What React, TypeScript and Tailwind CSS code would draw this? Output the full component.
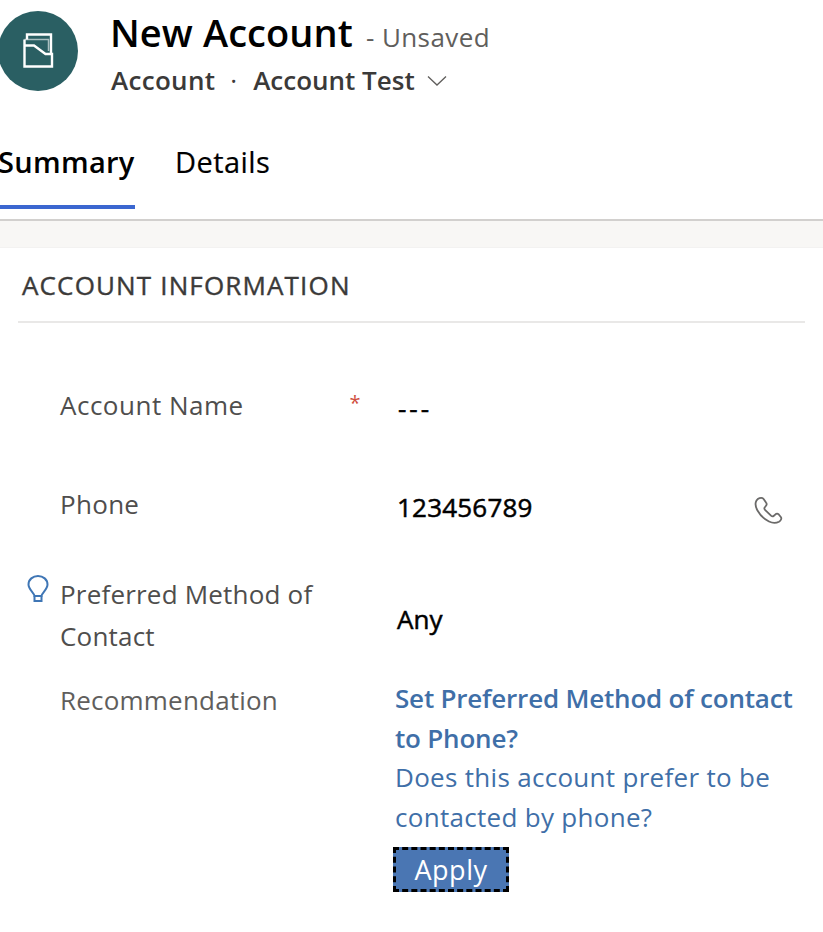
export default function App() {
  return (
    <div className="w-[823px] h-[932px] overflow-hidden bg-white font-['Open_Sans','Noto_Sans',sans-serif]">
      <header className="flex h-[118px] pt-[11px]">
        <div className="-ml-[2px] w-[80px] h-[80px] rounded-full bg-[#2a5f63] flex items-center justify-center shrink-0">
          <svg width="32" height="36" viewBox="0 0 32 36" fill="none" stroke="#ffffff" strokeWidth="2.400">
            <path d="M2.500 6.500V33.500H30V21H23.500L12 12.500H2.500" />
            <path d="M5 6.500V1.500H29V21" />
            <path d="M2.500 6.500H26.500V18" strokeWidth="1.500" opacity="0.6" />
          </svg>
        </div>
        <div className="ml-[33px] flex flex-col">
          <div className="-ml-[1px] -mt-[2px] flex items-baseline h-[46px]">
            <span className="text-[38px] leading-[46px] font-semibold text-black tracking-[0.1px]">New Account</span>
            <span className="ml-[13px] text-[26px] leading-[46px] text-[#605e5c] tracking-[0.4px]">- Unsaved</span>
          </div>
          <div className="flex items-center h-[36px] mt-[7px] text-[26px] font-semibold text-[#3b3a39]">
            <span className="tracking-[0.3px]">Account</span>
            <span className="ml-[15px] mr-[16px] font-normal">·</span>
            <span>Account Test</span>
            <svg className="ml-[12px] mt-[2px]" width="20" height="12" viewBox="0 0 20 12" fill="none" stroke="#605e5c" strokeWidth="1.300">
              <path d="M1 1.500L10 10L19 1.500" />
            </svg>
          </div>
        </div>
      </header>

      <nav className="flex h-[103px] border-b-2 border-[#d2d0ce] pt-[21px]">
        <div className="-ml-[2px] w-[137px] h-[70px] border-b-4 border-[#3b67d0] text-[29px] leading-[46px] font-semibold text-black tracking-[0.3px]">Summary</div>
        <div className="ml-[40px] text-[29px] leading-[46px] text-black tracking-[0.45px] [-webkit-text-stroke:0.2px_#000]">Details</div>
      </nav>

      <div className="h-[27px] bg-[#f8f7f5] border-b border-[#f3f2f1]" />

      <section className="px-[18px]">
        <h2 className="h-[75px] border-b-2 border-[#e9e8e7] pl-[4px] pt-[14px] text-[26px] leading-[46px] font-normal text-[#3b3a39] tracking-[1.150px] [-webkit-text-stroke:0.4px_#3b3a39]">ACCOUNT INFORMATION</h2>
      </section>

      <div className="grid grid-cols-[60px_335px_1fr] text-[26px]">
        <div className="h-[60px]" /><div /><div />

        <div />
        <div className="h-[99px] text-[#4f4e4d] leading-[46px] tracking-[0.5px] flex justify-between pr-[34px]">
          <span className="-mt-[1px]">Account Name</span>
          <span className="text-[#d0503f] text-[20px] -mt-[3px] font-normal">*</span>
        </div>
        <div className="ml-[3px] text-black leading-[46px] tracking-[3px] mt-[2px] [-webkit-text-stroke:0.5px_#000]">---</div>

        <div />
        <div className="h-[93px] text-[#4f4e4d] leading-[46px] -mt-[1px] tracking-[0.3px]">Phone</div>
        <div className="ml-[2px] flex justify-between pr-[40px] text-black leading-[46px] tracking-[0.2px] mt-[2px]">
          <span className="[-webkit-text-stroke:0.5px_#000]">123456789</span>
          <svg className="mt-[11px]" width="30" height="30" viewBox="0 0 30 30" fill="none" stroke="#6b6a69" strokeWidth="1.800" strokeLinejoin="round">
            <path d="M3.500 5.500C2 8 2 11 4.500 15.500C7 20 11 24 16 26.500C19.500 28.200 23 28.300 26 26.700C28 25.500 28.800 23.500 28 22.200L25.800 19.500C24.700 18.500 23.500 18.500 22.500 19.300L20.600 21C19.800 21.700 18.900 21.500 18 20.700L12 14.800C11.200 14 11.100 13 11.800 12.300L13 10.800C13.800 9.800 13.800 8.500 13 7.500L10.600 4C9.500 2.700 8 2.700 6.500 3.200C5.300 3.600 4.300 4.300 3.500 5.500Z" />
          </svg>
        </div>

        <div className="relative">
          <svg className="absolute left-[26px] top-0" width="26" height="30" viewBox="0 0 26 30" fill="none" stroke="#3f76b5" strokeWidth="2">
            <path d="M8.500 22C8 18.500 2.500 15.500 2.500 10.500C2.500 5.500 6.800 2 12 2C17.200 2 21.500 5.500 21.500 10.500C21.500 15.500 16 18.500 15.500 22Z" />
            <path d="M8.500 22V27H15.500V22" />
          </svg>
        </div>
        <div className="h-[107px] text-[#4f4e4d] leading-[42px] tracking-[0.2px] -mt-[1px]">Preferred Method of<br />Contact</div>
        <div className="ml-[2px] text-black leading-[46px] mt-[22px] [-webkit-text-stroke:0.5px_#000]">Any</div>

        <div />
        <div className="text-[#605e5c] leading-[42px] tracking-[0.2px] -mt-[1px]">Recommendation</div>
        <div className="-mt-[1px] text-[#3f6fa8] leading-[39.500px] tracking-[0.3px]">
          <div className="font-semibold tracking-[-0.2px]">Set Preferred Method of contact<br />to Phone?</div>
          <div>Does this account prefer to be<br />contacted by phone?</div>
          <button className="mt-[10px] block w-[116px] h-[45px] bg-[#4a76b3] text-white text-[27px] leading-[38px] tracking-[0.5px] border-[3px] border-dashed border-black -ml-[2px]">Apply</button>
        </div>
      </div>
    </div>
  );
}
